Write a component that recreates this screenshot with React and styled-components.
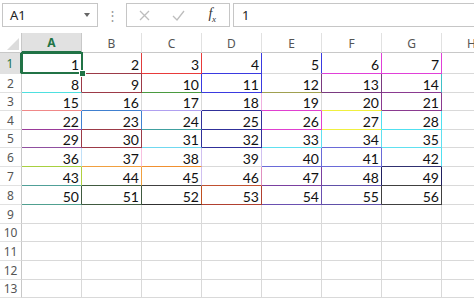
import React from "react";
import styled, { createGlobalStyle } from "styled-components";

const GlobalStyle = createGlobalStyle`
  html, body { margin: 0; padding: 0; background: #fff; }
  body { font-family: "Noto Sans", "Open Sans", sans-serif; overflow: hidden; }
  * { box-sizing: border-box; }
`;

const GRID = "#d9d9d9";
const GREEN = "#217346";

const Page = styled.div`
  width: 474px;
  height: 299px;
  overflow: hidden;
  display: flex;
  flex-direction: column;
`;

const FormulaBar = styled.div`
  height: 33px;
  display: flex;
  align-items: flex-start;
  padding: 3px 0 0 2px;
`;

const Box = styled.div`
  height: 24px;
  border: 1px solid #c6c6c6;
  background: #fff;
  display: flex;
  align-items: center;
  width: ${(p) => p.$w};
  flex: ${(p) => (p.$grow ? "1" : "none")};
  margin-left: ${(p) => p.$ml || "0"};
  margin-right: ${(p) => (p.$grow ? "-4px" : "0")};
`;

const NameText = styled.span`
  font-size: 13px;
  color: #222;
  padding-left: 7px;
  flex: 1;
`;

const DropArrow = styled.span`
  width: 0;
  height: 0;
  border-left: 3.5px solid transparent;
  border-right: 3.5px solid transparent;
  border-top: 4px solid #666;
  margin-right: 7px;
`;

const Dots = styled.div`
  width: 28px;
  height: 24px;
  display: flex;
  align-items: center;
  justify-content: center;
  color: #9a9a9a;
  font-size: 13px;
`;

const FxButton = styled.span`
  width: 34px;
  display: flex;
  justify-content: center;
  align-items: center;
`;

const FxText = styled.span`
  font-family: "Liberation Serif", "DejaVu Serif", serif;
  font-style: italic;
  font-size: 14px;
  color: #333;
  letter-spacing: -0.5px;
`;

const FxSub = styled.sub`
  font-size: 9px;
`;

const FormulaText = styled.span`
  font-size: 13px;
  color: #222;
  padding-left: 8px;
`;

const SheetWrap = styled.div`
  position: relative;
  flex: 1;
  overflow: hidden;
`;

const Sheet = styled.div`
  display: grid;
  grid-template-columns: 22px repeat(8, 60px);
  grid-template-rows: 20px 21px 19px 18px 19px 18px 19px 19px 19px 19px 18px 19px 19px 18px;
`;

const Corner = styled.div`
  border-right: 1px solid #c8c8c8;
  border-bottom: 1px solid #c8c8c8;
  display: flex;
  align-items: flex-end;
  justify-content: flex-end;
  padding: 0 2px 2px 0;
`;

const ColHead = styled.div`
  border-right: 1px solid ${(p) => (p.$sel ? "#c8c8c8" : "#e1e1e1")};
  border-bottom: ${(p) => (p.$sel ? `2px solid ${GREEN}` : "1px solid #c8c8c8")};
  background: ${(p) => (p.$sel ? "#e1e1e1" : "#fff")};
  color: ${(p) => (p.$sel ? GREEN : "#555")};
  font-weight: ${(p) => (p.$sel ? 700 : 400)};
  font-size: 12px;
  display: flex;
  align-items: center;
  justify-content: center;
  padding-top: 1px;
`;

const RowHead = styled.div`
  border-right: ${(p) => (p.$sel ? `2px solid ${GREEN}` : "1px solid #c8c8c8")};
  border-bottom: 1px solid #e1e1e1;
  background: ${(p) => (p.$sel ? "#e1e1e1" : "#fff")};
  color: ${(p) => (p.$sel ? GREEN : "#555")};
  font-size: 12px;
  display: flex;
  align-items: center;
  justify-content: center;
`;

const Cell = styled.div`
  border-right: 1px solid ${(p) => p.$r};
  border-bottom: 1px solid ${(p) => p.$b};
  font-family: Lato, "Liberation Sans", sans-serif;
  font-size: 14px;
  color: #111;
  display: flex;
  align-items: center;
  justify-content: flex-end;
  padding: 2px 2px 0 0;
`;

const Selection = styled.div`
  position: absolute;
  left: 21px;
  top: 19px;
  width: 62px;
  height: 22px;
  border: 2px solid ${GREEN};
  pointer-events: none;
`;

const Handle = styled.div`
  position: absolute;
  right: -5px;
  bottom: -5px;
  width: 7px;
  height: 7px;
  background: ${GREEN};
  border: 1px solid #fff;
`;

const G = GRID;
const borders = [
  [[G, G], ["#e03c3c", "#9c3a48"], ["#e83a3a", "#e83a3a"], ["#3a3ae0", "#3a3ae0"], ["#3a3ae0", G], ["#e040d8", "#e040d8"], ["#e040d8", "#e040d8"]],
  [["#9c3a48", "#4ee0e0"], ["#9c3a48", "#9c3a48"], ["#3a3ae0", "#4a9a40"], ["#3a3ae0", "#3a3ae0"], ["#7a3a80", "#a0a050"], ["#7a3a80", "#7a3a80"], ["#40c0c8", "#8a3a90"]],
  [[G, "#f08888"], [G, "#4080d0"], [G, "#b0a0f0"], ["#f0b0e0", "#30309a"], [G, "#e040d0"], ["#8a3a90", "#f0f040"], ["#8a3a90", "#8a3a90"]],
  [["#4080d0", "#9a3a9a"], ["#4080d0", "#9c3a48"], ["#30309a", "#40a0a0"], ["#30309a", "#30309a"], ["#e040d0", "#e040d0"], ["#50e0f0", "#f0f040"], ["#50e0f0", "#50e0f0"]],
  [["#9c3a48", "#9050a0"], ["#9c3a48", "#9c3a48"], ["#30309a", "#70d8f0"], ["#30309a", "#30309a"], ["#60e0f0", "#60e0f0"], ["#60e0f0", "#6a6ad8"], ["#60e0f0", "#60e0f0"]],
  [["#c0e0f8", "#a8d040"], ["#f8c0e0", "#f0a040"], ["#d0c0f0", "#f09030"], ["#d0c0f0", G], ["#6a6ad8", "#6a6ad8"], ["#6a6ad8", "#6a6ad8"], ["#50e0f0", "#303070"]],
  [["#b0d040", "#50a098"], ["#f0a040", "#405a40"], ["#d0c0f0", "#404040"], ["#e090c0", "#c05030"], ["#7a40a0", "#7a40a0"], ["#202060", "#6050a8"], ["#202060", "#404040"]],
  [["#405a40", "#50a090"], ["#405a40", "#405a40"], ["#c05020", "#303030"], ["#b04030", "#b04030"], ["#6a50b0", "#6a50b0"], ["#404040", "#6050a8"], ["#404040", "#404040"]],
];

const cols = ["A", "B", "C", "D", "E", "F", "G", "H"];
const rowCount = 13;

export default function App() {
  const cells = [];
  cells.push(
    <Corner key="corner">
      <svg width="12" height="12" viewBox="0 0 12 12">
        <polygon points="12,0 12,12 0,12" fill="#dcdcdc" />
      </svg>
    </Corner>
  );
  cols.forEach((c, j) =>
    cells.push(
      <ColHead key={"h" + c} $sel={j === 0}>
        {c}
      </ColHead>
    )
  );
  for (let i = 0; i < rowCount; i++) {
    cells.push(
      <RowHead key={"r" + i} $sel={i === 0}>
        {i + 1}
      </RowHead>
    );
    cols.forEach((c, j) => {
      const hasData = i < 8 && j < 7;
      const [r, b] = hasData ? borders[i][j] : [G, G];
      cells.push(
        <Cell key={c + i} $r={r} $b={b}>
          {hasData ? i * 7 + j + 1 : ""}
        </Cell>
      );
    });
  }

  return (
    <Page>
      <GlobalStyle />
      <FormulaBar>
        <Box $w="96px">
          <NameText>A1</NameText>
          <DropArrow />
        </Box>
        <Dots>⋮</Dots>
        <Box $w="104px">
          <FxButton>
            <svg width="11" height="11" viewBox="0 0 11 11">
              <path d="M1 1 L10 10 M10 1 L1 10" stroke="#bdbdbd" strokeWidth="1.3" fill="none" />
            </svg>
          </FxButton>
          <FxButton>
            <svg width="13" height="11" viewBox="0 0 13 11">
              <path d="M1 6 L5 10 L12 1" stroke="#bdbdbd" strokeWidth="1.3" fill="none" />
            </svg>
          </FxButton>
          <FxButton>
            <FxText>
              f<FxSub>x</FxSub>
            </FxText>
          </FxButton>
        </Box>
        <Box $grow $ml="3px">
          <FormulaText>1</FormulaText>
        </Box>
      </FormulaBar>
      <SheetWrap>
        <Sheet>{cells}</Sheet>
        <Selection>
          <Handle />
        </Selection>
      </SheetWrap>
    </Page>
  );
}
